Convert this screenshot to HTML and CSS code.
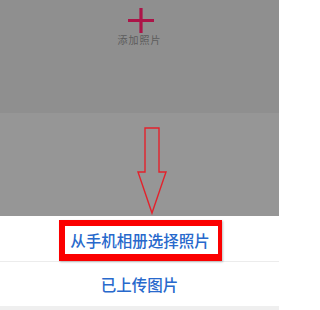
FILE: index.html
```html
<!DOCTYPE html>
<html lang="zh">
<head>
<meta charset="utf-8">
<link rel="stylesheet" href="styles.css">
</head>
<body>
<div class="page">
  <div class="upload">
    <svg class="plus" width="28" height="28" viewBox="0 0 28 28"><path d="M14 1V26M1 13.5H27" stroke="#ac1448" stroke-width="3.2" fill="none"/></svg>
    <div class="upload-label">添加照片</div>
  </div>
  <div class="band">
    <svg class="arrow" width="32" height="90" viewBox="0 0 32 90"><path d="M8 1H22V45H29L15 86L1 45H8Z" stroke="#e3222c" stroke-width="1.4" fill="none" stroke-linejoin="miter"/></svg>
  </div>
  <div class="sheet">
    <div class="option first"><span class="hl">从手机相册选择照片</span></div>
    <div class="option second">已上传图片</div>
    <div class="foot"></div>
  </div>
</div>
</body>
</html>
```
FILE: styles.css
```css
html, body { margin: 0; padding: 0; }
body { width: 279px; height: 310px; overflow: hidden; font-family: "Noto Sans CJK SC", "Noto Sans", sans-serif; background: #fff; }
.page { display: flex; flex-direction: column; height: 310px; }
.upload { height: 113px; background: #8f8f8f; display: flex; flex-direction: column; align-items: center; padding-top: 7px; box-sizing: border-box; }
.plus { display: block; margin-left: 2px; }
.upload-label { font-size: 10px; line-height: 12px; color: #5c5c5c; letter-spacing: 1px; margin-top: -1px; }
.band { height: 103px; background: #969696; display: flex; justify-content: center; padding-top: 14px; box-sizing: border-box; }
.arrow { display: block; margin-left: 27px; }
.sheet { flex: 1; display: flex; flex-direction: column; background: #fff; }
.option { display: flex; align-items: center; justify-content: center; color: #2869cc; font-size: 15.5px; font-weight: 500; }
.first { height: 46px; border-bottom: 1px solid #ececec; box-sizing: border-box; }
.hl { display: inline-block; border: 6px solid #fb0000; border-bottom-width: 7px; border-right-width: 4px; height: 28px; line-height: 28px; padding: 0 8px 0 5px; margin-left: 2px; margin-top: 3px; box-shadow: 1px 1px 2px rgba(0,0,0,0.25); font-size: 15.5px; }
.second { height: 44px; }
.foot { flex: 1; background: #efefef; }
```
